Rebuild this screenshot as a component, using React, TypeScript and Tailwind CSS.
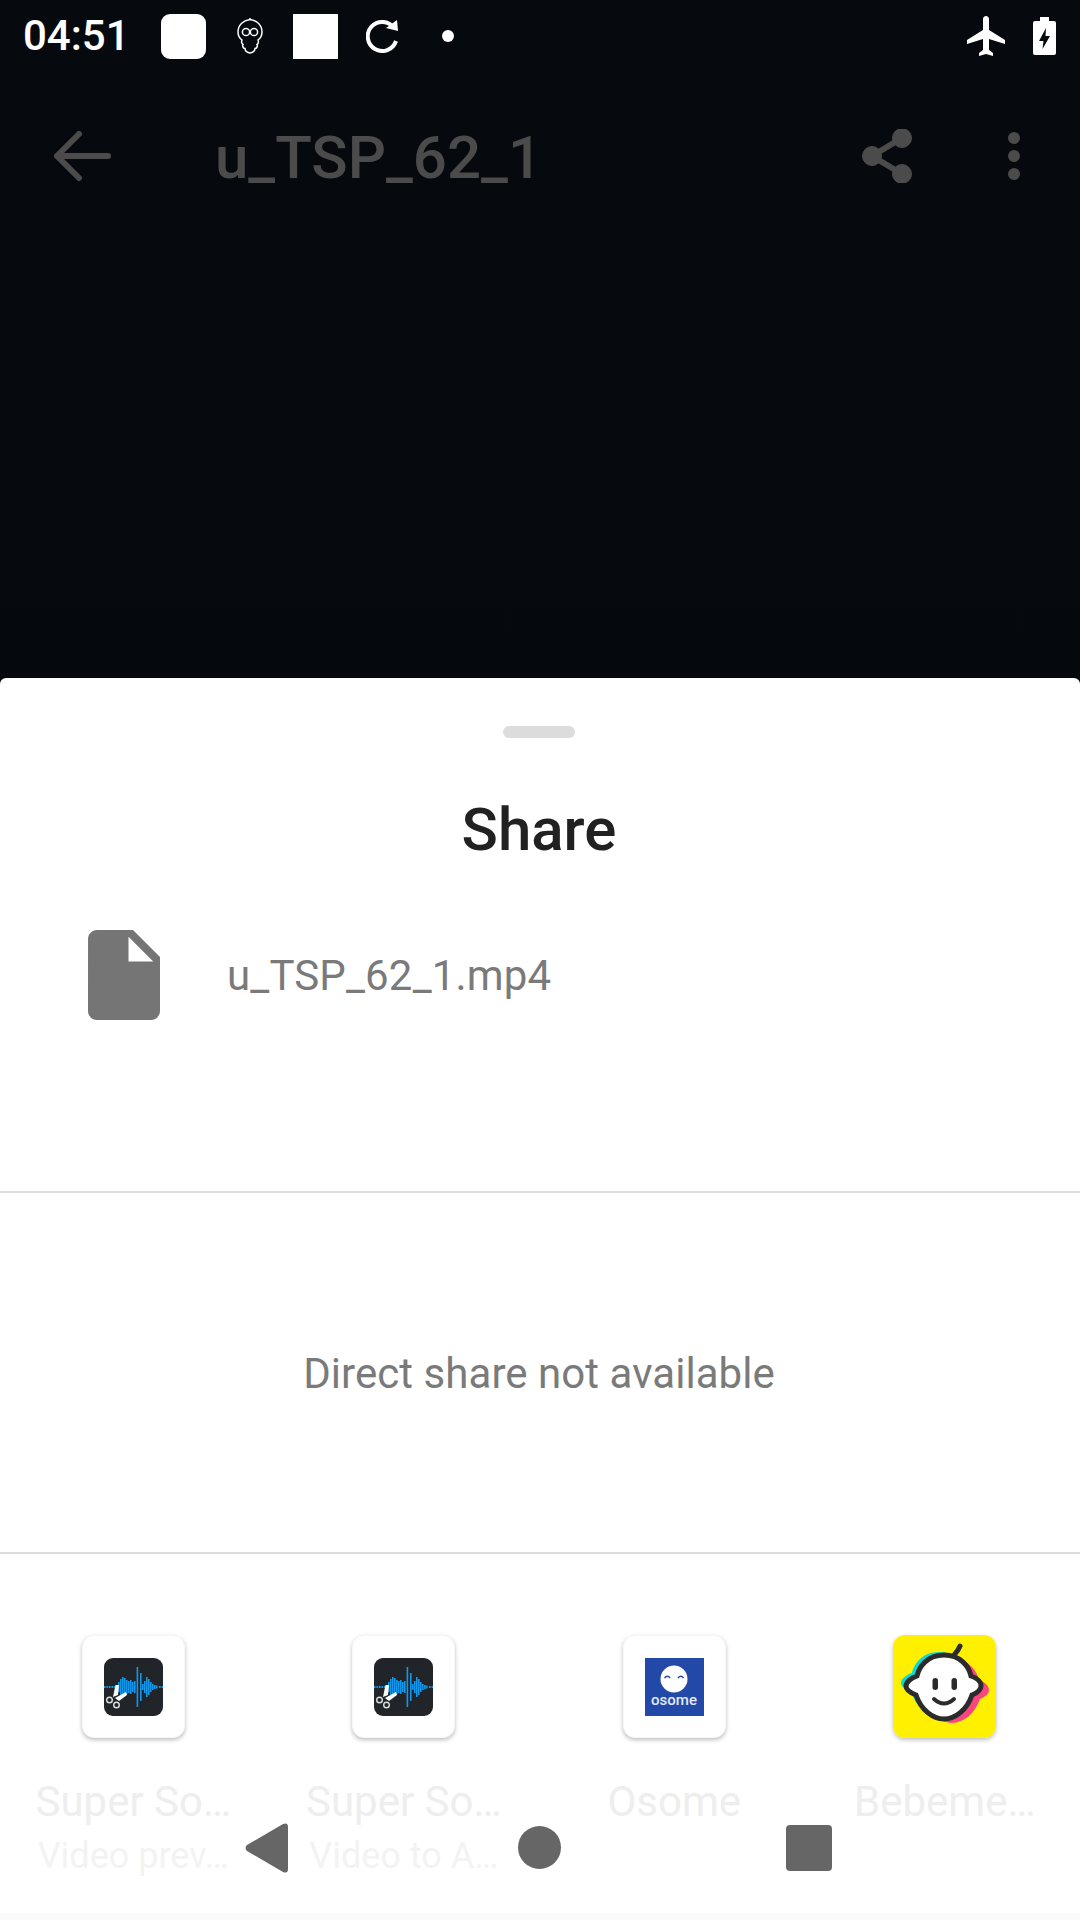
const waveBars = [
  [0, 1], [2.5, 1], [5, 1], [7.5, 1], [10, 1], [14, 5], [16, 8], [18, 10], [20, 9], [22, 7], [24, 6], [26, 7], [28, 5], [30, 6],
  [32.6, 20], [36, 14], [38, 3], [40, 6], [42, 10], [44, 8], [46, 5], [48, 3], [50, 2], [52, 1.5], [55, 1], [57.5, 1],
];

function SoundIcon() {
  return (
    <svg viewBox="0 0 59 58" className="h-[58px] w-[59px]">
      <rect width="59" height="58" rx="9" fill="#212529" />
      {waveBars.map(([x, h]) => (
        <rect key={x} x={x} y={29 - h} width="1.6" height={h * 2} fill="#1497e8" />
      ))}
      <path d="M9 39 L11.5 27 L15 27 L14 37 Z" fill="#fff" />
      <path d="M11 40 L22 34 L23 37 L15 43 Z" fill="#fff" />
      <circle cx="5.5" cy="42" r="2.8" fill="none" stroke="#ddd" strokeWidth="1.4" />
      <circle cx="12.5" cy="47" r="2.8" fill="none" stroke="#ddd" strokeWidth="1.4" />
    </svg>
  );
}

function OsomeIcon() {
  return (
    <svg viewBox="0 0 59 58" className="h-[58px] w-[59px]">
      <rect width="59" height="58" fill="#2249a8" />
      <circle cx="29" cy="21" r="13.5" fill="#fff" />
      <path d="M19.5 20 q3 -3.5 5.5 0 M33 20 q3 -3.5 5.5 0" fill="none" stroke="#2249a8" strokeWidth="1.5" />
      <text x="29" y="47" textAnchor="middle" fontFamily="Roboto, sans-serif" fontSize="15" fontWeight="500" fill="#e4e9f6">
        osome
      </text>
    </svg>
  );
}

function BabyIcon() {
  const face =
    "M51 20 C68 20 76 32 78 41 C84 43 88 47 88 51 C88 55 84 58 79 60 C74 75 62 84 51 84 C40 84 28 75 23 60 C18 58 13 55 13 51 C13 47 18 43 24 41 C26 32 34 20 51 20 Z";
  return (
    <svg viewBox="0 0 103 103" className="h-[103px] w-[103px]">
      <rect width="103" height="103" rx="6" fill="#fff000" />
      <path d={face} fill="#05dbe0" transform="translate(-5 -3)" />
      <path d={face} fill="#f9467f" transform="translate(8 4)" />
      <path d={face} fill="#fff" stroke="#2b2b2b" strokeWidth="5" />
      <path d="M61 20 Q65 16 67 11" fill="none" stroke="#2b2b2b" strokeWidth="5" strokeLinecap="round" />
      <rect x="39.5" y="43" width="5.5" height="12" rx="2.7" fill="#2b2b2b" />
      <rect x="58.5" y="43" width="5.5" height="12" rx="2.7" fill="#2b2b2b" />
      <path d="M41 64 Q51 73 61 64" fill="none" stroke="#2b2b2b" strokeWidth="4" strokeLinecap="round" />
    </svg>
  );
}

const apps = [
  { icon: <SoundIcon />, name: "Super So…", sub: "Video prev…" },
  { icon: <SoundIcon />, name: "Super So…", sub: "Video to A…" },
  { icon: <OsomeIcon />, name: "Osome", sub: "" },
  { icon: <BabyIcon />, name: "Bebeme…", sub: "", filled: true },
];

export default function App() {
  return (
    <div className="relative flex h-[1920px] w-[1080px] flex-col overflow-hidden bg-gradient-to-b from-[#060a0e] to-[#040609] font-['Roboto',sans-serif]">
      {/* Status bar */}
      <div className="flex h-[72px] items-center text-white">
        <span className="ml-[23px] w-[138px] text-[42px] font-medium leading-none">04:51</span>
        <div className="h-[45px] w-[45px] rounded-[9px] bg-white" />
        <svg viewBox="0 0 26 36" className="ml-[31px] h-[36px] w-[26px]" fill="none" stroke="#fff" strokeWidth="1.5">
          <path d="M13 1.5 C20 2.5 25 7 25 14 C25 18 23 20.5 21 22 C22 24 21 26 20 26.5 C21 28.5 19.5 30.5 18 30.5 C18 33 15.5 35 13 35 C10.5 35 8 33 8 30.5 C6.5 30.5 5 28.5 6 26.5 C5 26 4 24 5 22 C3 20.5 1 18 1 14 C1 7 6 2.5 13 1.5 Z" />
          <path d="M13 0 V2" />
          <circle cx="9" cy="14" r="3.6" />
          <circle cx="17" cy="14" r="3.6" />
        </svg>
        <div className="ml-[30px] h-[45px] w-[45px] bg-white" />
        <svg viewBox="0 0 32 34" className="ml-[28px] h-[34px] w-[32px]" fill="none">
          <path d="M28 9 A14.5 14.5 0 1 0 30 22" stroke="#fff" strokeWidth="4" />
          <path d="M20 9 L32 12 L31 1 Z" fill="#fff" />
        </svg>
        <div className="ml-[44px] h-[12px] w-[12px] rounded-full bg-white" />
        <svg viewBox="0 0 24 24" className="ml-auto h-[48px] w-[48px]" fill="#fff">
          <path d="M21 16v-2l-8-5V3.5c0-.83-.67-1.5-1.5-1.5S10 2.67 10 3.5V9l-8 5v2l8-2.5V19l-2 1.5V22l3.5-1 3.5 1v-1.5L13 19v-5.5l8 2.5z" />
        </svg>
        <svg viewBox="0 0 23 38" className="ml-[22px] mr-[24px] h-[38px] w-[23px]">
          <path d="M7 0 H16 V4 H21 Q23 4 23 6 V36 Q23 38 21 38 H2 Q0 38 0 36 V6 Q0 4 2 4 H7 Z" fill="#fff" />
          <path d="M13 11 L6 24 H10.5 L9.5 32 L17 19 H12.5 Z" fill="#05080c" />
        </svg>
      </div>

      {/* Dimmed toolbar */}
      <div className="flex h-[168px] items-center text-[#4b4b4b]">
        <svg viewBox="0 0 58 50" className="ml-[53px] h-[50px] w-[58px]" fill="none" stroke="#4b4b4b" strokeWidth="6" strokeLinecap="round" strokeLinejoin="round">
          <path d="M55 25 H4 M26 3 L4 25 L26 47" />
        </svg>
        <span className="ml-[104px] mt-[4px] text-[60px] font-medium leading-none">u_TSP_62_1</span>
        <svg viewBox="0 0 50 54" className="ml-auto h-[54px] w-[50px]" fill="#4b4b4b" stroke="#4b4b4b">
          <circle cx="10" cy="27" r="9.5" />
          <circle cx="40" cy="9" r="9.5" />
          <circle cx="40" cy="45" r="9.5" />
          <path d="M10 27 L40 9 M10 27 L40 45" strokeWidth="6" />
        </svg>
        <div className="ml-[96px] mr-[60px] flex w-[12px] flex-col gap-[6px]">
          <div className="h-[12px] w-[12px] rounded-full bg-[#4b4b4b]" />
          <div className="h-[12px] w-[12px] rounded-full bg-[#4b4b4b]" />
          <div className="h-[12px] w-[12px] rounded-full bg-[#4b4b4b]" />
        </div>
      </div>

      <div className="h-[438px]" />

      {/* Share sheet */}
      <div className="flex flex-1 flex-col overflow-hidden rounded-t-[6px] bg-white">
        <div className="flex h-[515px] flex-col items-center border-b-2 border-[#dcdcdc] pr-[2px]">
          <div className="mt-[48px] h-[12px] w-[72px] rounded-full bg-[#dcdcdc]" />
          <h1 className="mt-[57px] text-[60px] font-[470] leading-[70px] text-[#212121]">Share</h1>
          <div className="mt-[56px] flex w-full items-center">
            <svg viewBox="0 0 24 24" className="ml-[70px] h-[108px] w-[108px]" fill="#757575">
              <path d="M6 2c-1.1 0-1.99.9-1.99 2L4 20c0 1.1.89 2 1.99 2H18c1.1 0 2-.9 2-2V8l-6-6H6zm7 7V3.5L18.5 9H13z" />
            </svg>
            <span className="ml-[49px] mt-[2px] text-[42px] leading-none tracking-[0.15px] text-[#7a7a7a]">u_TSP_62_1.mp4</span>
          </div>
        </div>
        <div className="flex h-[361px] items-center justify-center border-b-2 border-[#dcdcdc] pr-[2px] pt-[2px]">
          <span className="text-[42px] leading-none tracking-[0.05px] text-[#7a7a7a]">Direct share not available</span>
        </div>
        <div className="-ml-[2px] grid w-[1082px] grid-cols-4 pt-[81px]">
          {apps.map((app, i) => (
            <div key={i} className="flex flex-col items-center">
              <div className={`flex h-[103px] w-[103px] items-center justify-center overflow-hidden rounded-[12px] bg-white shadow-[0_2px_4px_rgba(0,0,0,0.25)] ${app.filled ? "" : "border border-[#f7f7f7]"}`}>
                {app.icon}
              </div>
              <span className="mt-[39px] text-[42px] leading-[50px] text-[#eeeeee]">{app.name}</span>
              <span className="mt-[7px] h-[44px] text-[36px] leading-[44px] text-[#f3f3f3]">{app.sub}</span>
            </div>
          ))}
        </div>
      </div>

      {/* Nav bar drawn over the sheet */}
      <div className="absolute bottom-0 left-0 flex h-[144px] w-full items-start pt-[47px]">
        <svg viewBox="0 0 43 50" className="ml-[245px] h-[50px] w-[43px]" fill="#666">
          <path d="M2 22 L38 1 Q43 -1 43 4 V46 Q43 51 38 49 L2 28 Q-1 25 2 22 Z" />
        </svg>
        <div className="ml-[230px] mt-[3px] h-[43px] w-[43px] rounded-full bg-[#666]" />
        <div className="ml-[225px] mt-[2px] h-[46px] w-[46px] rounded-[4px] bg-[#666]" />
      </div>
      <div className="absolute bottom-0 left-0 h-[7px] w-full bg-[#fafafa]" />
    </div>
  );
}
